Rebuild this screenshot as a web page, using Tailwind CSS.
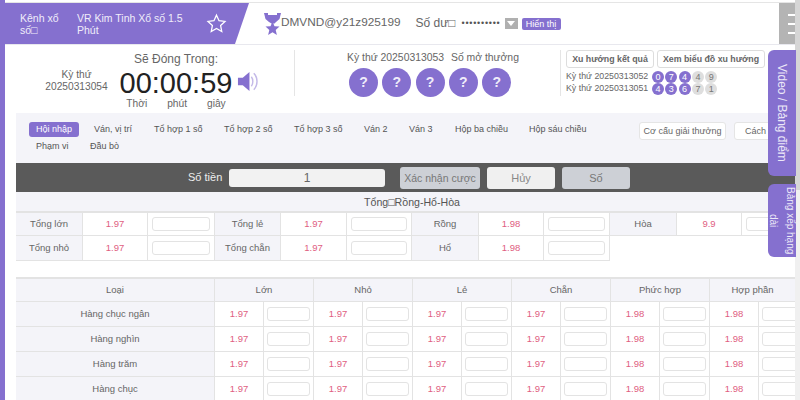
<!DOCTYPE html>
<html lang="en">
<head>
    <meta charset="UTF-8">
    <title>VR Kim Tinh</title>
    <script src="https://cdn.jsdelivr.net/npm/@tailwindcss/browser@4"></script>
</head>
<body class="w-[800px] h-[400px] overflow-hidden relative bg-white font-['Liberation_Sans',Arial,sans-serif] text-[#666]">
    <div class="flex h-[400px]">
        <div class="w-[5px] bg-[#8570cf] shrink-0"></div>
        <div class="w-[790px] flex flex-col shrink-0 overflow-hidden">
            <!-- top header -->
            <div class="h-[3px] border-b border-[#e5e5e5] shrink-0"></div>
            <div class="h-[42px] flex items-center border-b border-[#e8e8ee] shrink-0">
                <div class="w-[244px] h-[41px] bg-[#8570cf] [clip-path:polygon(0_0,100%_0,230px_100%,0_100%)] flex items-center text-[#f0edfa] text-[10.5px] leading-[12px] shrink-0">
                    <div class="w-[43px] ml-[15px] shrink-0">Kênh xổ số□</div>
                    <div class="w-[120px] ml-[14px] shrink-0">VR Kim Tinh Xổ số 1.5 Phút</div>
                    <svg class="w-[21px] h-[21px] ml-[9px] shrink-0" viewBox="0 0 24 24" fill="none" stroke="white" stroke-width="1.5"><path d="M12 2.500l2.900 6.300 6.800.8-5 4.700 1.300 6.800-6-3.400-6 3.400 1.300-6.800-5-4.700 6.800-.8z"/></svg>
                </div>
                <svg class="w-[17px] h-[23px] ml-[15px] -mt-[1px] shrink-0" viewBox="0 0 17 23" fill="#8570cf"><path d="M0 1h4v2h9V1h4l-1.500 6-3.500 3-1.500 1.500h-3L5 10 1.500 7z"/><path d="M8.500 9.500l2 4.700 5 .4-3.800 3.300 1.200 5-4.400-2.700-4.400 2.700 1.200-5-3.800-3.300 5-.4z"/></svg>
                <span class="text-[11.8px] -mt-[1px]">DMVND@y21z925199</span>
                <span class="text-[12px] ml-[15px] -mt-[1px]">Số dư□</span>
                <span class="text-[9px] text-[#555] ml-[6px] tracking-[0.75px]">••••••••••</span>
                <span class="w-[13px] h-[11px] bg-[#b0b0b0] ml-[4px] flex items-center justify-center shrink-0"><span class="border-x-[4px] border-x-transparent border-t-[5px] border-t-white"></span></span>
                <span class="w-[39px] h-[12px] leading-[12px] text-center bg-[#8570cf] text-white text-[9px] rounded-[2px] ml-[4px] shrink-0">Hiển thị</span>
                <div class="w-[16px] h-[41px] bg-[#b4b4b4] ml-auto flex flex-col items-end justify-center gap-[7px] shrink-0">
                    <span class="w-[7px] h-[2px] bg-white"></span>
                    <span class="w-[7px] h-[2px] bg-white"></span>
                    <span class="w-[7px] h-[2px] bg-white"></span>
                </div>
            </div>
            <!-- draw info -->
            <div class="h-[68px] flex shrink-0">
                <div class="w-[103px] pl-[40px] pt-[24px] text-[10.2px] leading-[12px] text-center shrink-0">
                    <div class="w-[63px]">Kỳ thứ<br>20250313054</div>
                </div>
                <div class="w-[116px] ml-[10px] shrink-0 flex flex-col items-center">
                    <div class="text-[12px] leading-[14px] mt-[7px]">Sẽ Đóng Trong:</div>
                    <div class="text-[29px] leading-[30px] text-[#222] whitespace-nowrap mt-[2px]">00:00:59</div>
                    <div class="flex text-[10.2px] leading-[12px] gap-[20px]"><span>Thời</span><span>phút</span><span>giây</span></div>
                </div>
                <svg class="w-[23px] h-[23px] mt-[25px] ml-[3px] shrink-0" viewBox="0 0 24 24" fill="#8570cf"><path d="M1 8h5l7-6v20l-7-6H1z"/><path d="M15 7c2 2.500 2 7.500 0 10M17.500 3.500c4.500 4.500 4.500 12.500 0 17" fill="none" stroke="#c4b9e8" stroke-width="1.500"/></svg>
                <div class="w-px h-[46px] bg-[#e5e5e5] mt-[5px] ml-[34px] shrink-0"></div>
                <div class="w-[265px] shrink-0 flex flex-col">
                    <div class="text-[10.4px] leading-[14px] mt-[6px] ml-[52px] whitespace-nowrap">Kỳ thứ 20250313053 <span class="ml-[4px]">Số mở thưởng</span></div>
                    <div class="flex gap-[4.300px] ml-[54px] mt-[3px]">
                        <div class="w-[29px] h-[29px] rounded-full bg-[#8570cf] text-[#f0edfa] text-[14px] font-bold flex items-center justify-center shrink-0">?</div>
                        <div class="w-[29px] h-[29px] rounded-full bg-[#8570cf] text-[#f0edfa] text-[14px] font-bold flex items-center justify-center shrink-0">?</div>
                        <div class="w-[29px] h-[29px] rounded-full bg-[#8570cf] text-[#f0edfa] text-[14px] font-bold flex items-center justify-center shrink-0">?</div>
                        <div class="w-[29px] h-[29px] rounded-full bg-[#8570cf] text-[#f0edfa] text-[14px] font-bold flex items-center justify-center shrink-0">?</div>
                        <div class="w-[29px] h-[29px] rounded-full bg-[#8570cf] text-[#f0edfa] text-[14px] font-bold flex items-center justify-center shrink-0">?</div>
                    </div>
                </div>
                <!-- trend panel -->
                <div class="w-[210px] h-[46px] mt-[5px] border-l border-[#e5e5e5] pl-[5px] shrink-0">
                    <div class="flex gap-[3px]">
                        <span class="w-[88px] h-[18px] border border-[#ddd] rounded-[3px] text-[8.800px] font-bold leading-[16px] text-center whitespace-nowrap">Xu hướng kết quả</span>
                        <span class="w-[108px] h-[18px] border border-[#ddd] rounded-[3px] text-[8.800px] font-bold leading-[16px] text-center whitespace-nowrap">Xem biểu đồ xu hướng</span>
                    </div>
                    <div class="flex items-center mt-[3px] h-[12px] text-[8.800px] whitespace-nowrap">
                        <span class="w-[86px]">Kỳ thứ 20250313052</span>
                        <span class="flex gap-[1.300px] text-[9px] text-center leading-[12px]">
                            <span class="w-[12px] h-[12px] rounded-full bg-[#8570cf] text-white">0</span>
                            <span class="w-[12px] h-[12px] rounded-full bg-[#8570cf] text-white">7</span>
                            <span class="w-[12px] h-[12px] rounded-full bg-[#8570cf] text-white">4</span>
                            <span class="w-[12px] h-[12px] rounded-full bg-[#dedede] text-[#777]">4</span>
                            <span class="w-[12px] h-[12px] rounded-full bg-[#dedede] text-[#777]">9</span>
                        </span>
                    </div>
                    <div class="flex items-center h-[12px] text-[8.800px] whitespace-nowrap">
                        <span class="w-[86px]">Kỳ thứ 20250313051</span>
                        <span class="flex gap-[1.300px] text-[9px] text-center leading-[12px]">
                            <span class="w-[12px] h-[12px] rounded-full bg-[#8570cf] text-white">4</span>
                            <span class="w-[12px] h-[12px] rounded-full bg-[#8570cf] text-white">3</span>
                            <span class="w-[12px] h-[12px] rounded-full bg-[#8570cf] text-white">6</span>
                            <span class="w-[12px] h-[12px] rounded-full bg-[#dedede] text-[#777]">7</span>
                            <span class="w-[12px] h-[12px] rounded-full bg-[#dedede] text-[#777]">1</span>
                        </span>
                    </div>
                </div>
            </div>
            <!-- tabs -->
            <div class="h-[50px] ml-[11px] bg-[#f4f4f9] relative shrink-0">
                <div class="flex text-[9px] leading-[14px] pt-[9px] text-[#555] whitespace-nowrap">
                    <span class="ml-[13px] w-[50px] h-[15px] leading-[15px] bg-[#8570cf] text-white rounded-[3px] text-center">Hội nhập</span>
                    <span class="ml-[15px] w-[38px]">Ván, vị trí</span>
                    <span class="ml-[22px] w-[48px]">Tổ hợp 1 số</span>
                    <span class="ml-[22px] w-[48px]">Tổ hợp 2 số</span>
                    <span class="ml-[22px] w-[48px]">Tổ hợp 3 số</span>
                    <span class="ml-[22px] w-[23px]">Ván 2</span>
                    <span class="ml-[22px] w-[23px]">Ván 3</span>
                    <span class="ml-[23px] w-[52px]">Hộp ba chiều</span>
                    <span class="ml-[22px] w-[57px]">Hộp sáu chiều</span>
                </div>
                <div class="flex text-[9px] leading-[14px] mt-[2px] text-[#555]">
                    <span class="ml-[20px] w-[33px]">Phạm vi</span>
                    <span class="ml-[21px]">Đầu bò</span>
                </div>
                <div class="absolute left-[623px] top-[9px] w-[87px] h-[18px] bg-white border border-[#e5e5e5] rounded-[3px] text-[9px] leading-[16px] text-center whitespace-nowrap">Cơ cấu giải thưởng</div>
                <div class="absolute left-[718px] top-[9px] w-[40px] h-[18px] bg-white border border-[#e5e5e5] rounded-[3px] text-[9px] leading-[16px] pl-[10px]">Cách</div>
            </div>
            <!-- amount bar -->
            <div class="h-[29px] ml-[11px] bg-[#5a5a5a] flex items-center text-[11px] shrink-0">
                <span class="ml-[172px] w-[33px] text-[#eee] whitespace-nowrap">Số tiền</span>
                <span class="ml-[8px] w-[156px] h-[18px] bg-[#f2f2f2] rounded-[3px] text-center leading-[18px] text-[12px]">1</span>
                <span class="ml-[15px] w-[80px] h-[22px] bg-[#cdd0d6] rounded-[3px] text-center leading-[22px] text-[#777] text-[10.500px] whitespace-nowrap">Xác nhận cược</span>
                <span class="ml-[7px] w-[68px] h-[22px] bg-[#f0f0f0] rounded-[3px] text-center leading-[22px] text-[#888]">Hủy</span>
                <span class="ml-[7px] w-[68px] h-[22px] bg-[#cdd0d6] rounded-[3px] text-center leading-[22px] text-[#777]">Số</span>
            </div>
            <!-- tong rong ho hoa -->
            <div class="h-[21px] ml-[11px] pl-[13px] bg-[#f4f4f9] border-b-2 border-[#e3e3e3] text-[10.600px] leading-[20px] text-center text-[#555] shrink-0">Tổng□Rồng-Hổ-Hòa</div>
            <div id="top" class="ml-[11px] h-[48px] text-[9.500px] text-center shrink-0"></div>
            <!-- table -->
            <div class="mt-[16px] ml-[11px] border-t-2 border-[#e3e3e3] text-[9.500px] text-center">
                <div class="flex h-[23px] leading-[22px] bg-[#f4f4f9] border-b border-[#e3e3e3]">
                    <div class="w-[199px] border-r border-[#e3e3e3] shrink-0">Loại</div>
                    <div class="w-[99px] border-r border-[#e3e3e3] shrink-0">Lớn</div>
                    <div class="w-[99px] border-r border-[#e3e3e3] shrink-0">Nhỏ</div>
                    <div class="w-[99px] border-r border-[#e3e3e3] shrink-0">Lẻ</div>
                    <div class="w-[99px] border-r border-[#e3e3e3] shrink-0">Chẵn</div>
                    <div class="w-[99px] border-r border-[#e3e3e3] shrink-0">Phức hợp</div>
                    <div class="w-[85px] shrink-0">Hợp phần</div>
                </div>
                <div id="rows"></div>
            </div>
        </div>
        <!-- page scrollbar -->
        <div class="w-[5px] bg-[#f0f0f0] shrink-0">
            <div class="h-[190px] bg-[#d6d6d6]"></div>
        </div>
    </div>

    <!-- side tabs -->
    <div class="absolute left-[768px] top-[50px] w-[28px] h-[126px] bg-[#8570cf] rounded-l-[6px] text-[#ece8f8] text-[12px] [writing-mode:vertical-rl] flex items-center justify-center">Video / Bảng điểm</div>
    <div class="absolute left-[768px] top-[184px] w-[28px] h-[73px] bg-[#8570cf] rounded-l-[6px] text-[#ece8f8] text-[10px] leading-[12px] [writing-mode:vertical-rl] text-center whitespace-nowrap">
        <div>Bảng xếp hạng</div>
        <div class="mr-[5px]">dài</div>
    </div>

    <script>
        const labelCell = 'bg-[#f4f4f9] border-r border-b border-[#e3e3e3] flex items-center justify-center shrink-0';
        const oddsCell = 'text-[#e0607f] border-r border-b border-[#e3e3e3] flex items-center justify-center shrink-0';
        const inputCell = 'border-r border-b border-[#e3e3e3] flex items-center justify-center shrink-0';
        const inputBox = '<span class="h-[14px] w-[calc(100%-8px)] border border-[#e3e3e3] rounded-[3px]"></span>';

        // column widths of each label / odds / input group
        const groups = [
            ['w-[67px]', 'w-[65px]', 'w-[67px]'],
            ['w-[66px]', 'w-[66px]', 'w-[65px]'],
            ['w-[67px]', 'w-[65px]', 'w-[66px]'],
            ['w-[67px]', 'w-[65px]', 'w-[66px]']
        ];

        function topGroup(label, odds, w) {
            return `<div class="${labelCell} ${w[0]}">${label}</div><div class="${oddsCell} ${w[1]}">${odds}</div><div class="${inputCell} ${w[2]}">${inputBox}</div>`;
        }

        const topRows = [
            [['Tổng lớn', '1.97'], ['Tổng lẻ', '1.97'], ['Rồng', '1.98'], ['Hòa', '9.9']],
            [['Tổng nhỏ', '1.97'], ['Tổng chẵn', '1.97'], ['Hổ', '1.98']]
        ];
        document.getElementById('top').innerHTML = topRows.map((row, i) =>
            `<div class="flex ${i === 0 ? 'h-[23px]' : 'h-[25px]'}">` +
            row.map((c, j) => topGroup(c[0], c[1], groups[j])).join('') +
            '</div>').join('');

        const rowNames = ['Hàng chục ngân', 'Hàng nghìn', 'Hàng trăm', 'Hàng chục'];
        const odds = ['1.97', '1.97', '1.97', '1.97', '1.98', '1.98'];
        document.getElementById('rows').innerHTML = rowNames.map(name =>
            `<div class="flex h-[25px] border-b border-[#e3e3e3]"><div class="w-[199px] bg-[#f4f4f9] border-r border-[#e3e3e3] flex items-center justify-center shrink-0">${name}</div>` +
            odds.map(o => `<div class="w-[99px] flex border-r border-[#e3e3e3] shrink-0"><span class="w-[49px] flex items-center justify-center text-[#e0607f] border-r border-[#e3e3e3] shrink-0">${o}</span><span class="flex-1 flex items-center justify-center"><span class="w-[43px] h-[14px] border border-[#e3e3e3] rounded-[3px]"></span></span></div>`).join('') +
            '</div>').join('');
    </script>
</body>
</html>
